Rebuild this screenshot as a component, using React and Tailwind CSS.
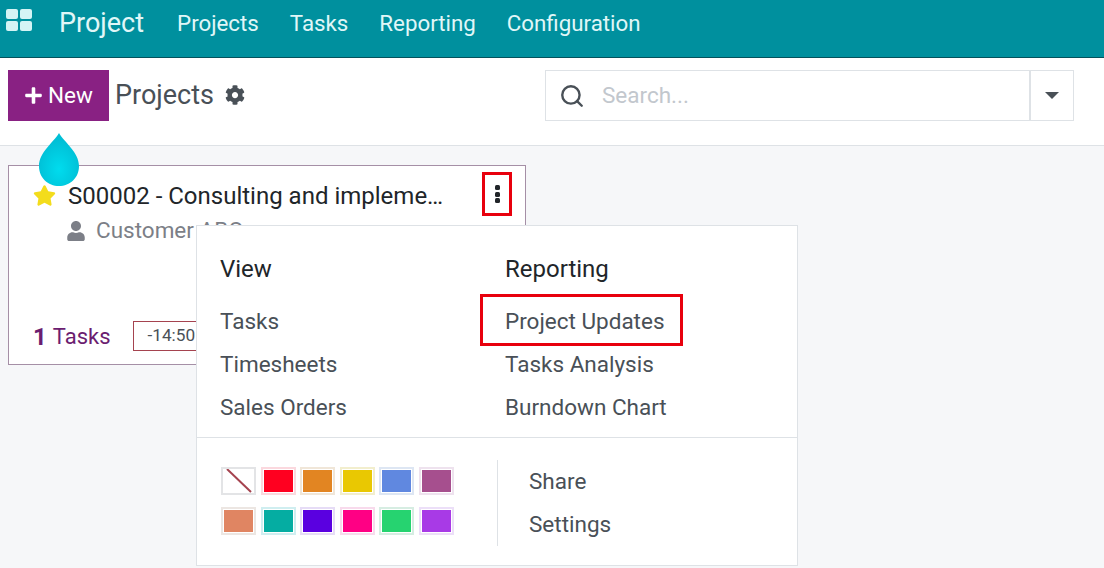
import React from 'react';
import { Search } from 'lucide-react';
import { FaCog, FaUser, FaStar, FaPlus } from 'react-icons/fa';

const navLinks = ['Projects', 'Tasks', 'Reporting', 'Configuration'];
const viewLinks = ['Tasks', 'Timesheets', 'Sales Orders'];
const reportLinks = ['Tasks Analysis', 'Burndown Chart'];

const swatches = [
  { color: 'bg-[#fff]', ring: 'border-[#e3e4e6]', none: true },
  { color: 'bg-[#ff0020]', ring: 'border-[#fbd8de]' },
  { color: 'bg-[#e28522]', ring: 'border-[#f0e6d8]' },
  { color: 'bg-[#e9c802]', ring: 'border-[#f2eecd]' },
  { color: 'bg-[#6088e0]', ring: 'border-[#dde6f3]' },
  { color: 'bg-[#a64f8e]', ring: 'border-[#eee2ee]' },
  { color: 'bg-[#e08562]', ring: 'border-[#ece6e2]' },
  { color: 'bg-[#05ada2]', ring: 'border-[#cfeef0]' },
  { color: 'bg-[#5a00e0]', ring: 'border-[#e6dcf6]' },
  { color: 'bg-[#ff0084]', ring: 'border-[#f8daec]' },
  { color: 'bg-[#26d370]', ring: 'border-[#d6ede2]' },
  { color: 'bg-[#a83ae6]', ring: 'border-[#ecdff8]' },
];

function AppsIcon() {
  return (
    <svg width="26" height="22" viewBox="0 0 26 22" fill="#d5f4f5">
      <rect x="0" y="0" width="12" height="10" rx="2" />
      <rect x="14" y="0" width="12" height="10" rx="2" />
      <rect x="0" y="12" width="12" height="10" rx="2" />
      <rect x="14" y="12" width="12" height="10" rx="2" />
    </svg>
  );
}

function Drop() {
  return (
    <svg className="absolute left-[38px] top-[132px] z-10" width="42" height="55" viewBox="0 0 42 55">
      <defs>
        <radialGradient id="drop" cx="50%" cy="68%" r="55%">
          <stop offset="0%" stopColor="#00dcee" />
          <stop offset="100%" stopColor="#00bfd6" />
        </radialGradient>
      </defs>
      <path d="M21 1 C26 10 41 20 41 34 C41 46 32 54 21 54 C10 54 1 46 1 34 C1 20 16 10 21 1 Z" fill="url(#drop)" />
    </svg>
  );
}

function Swatch({ color, ring, none }) {
  return (
    <div className={`relative w-[35px] h-[28px] border-[2px] ${ring} p-[1px]`}>
      <div className={`w-full h-full ${color}`} />
      {none && (
        <svg className="absolute inset-0" width="31" height="24" viewBox="0 0 31 24">
          <line x1="4" y1="0" x2="28" y2="23" stroke="#a5434f" strokeWidth="2" />
        </svg>
      )}
    </div>
  );
}

function ProjectCard() {
  return (
    <div className="w-[518px] h-[200px] border border-[#a58fa6] bg-white flex flex-col pl-[24px] pr-[13px]">
      <div className="flex items-center h-[44px] mt-[6px]">
        <FaStar size={23} className="text-[#f3dc1c] shrink-0 mt-[2px]" />
        <span className="ml-[12px] mt-[4px] text-[24px] leading-[32px] text-[#212529] w-[376px] truncate">S00002 - Consulting and implementation</span>
        <div className="ml-auto w-[30px] h-[44px] border-[3px] border-[#e8000d] flex flex-col items-center justify-center gap-[1.5px]">
          <span className="w-[5px] h-[5px] rounded-[1.5px] bg-[#212529]" />
          <span className="w-[5px] h-[5px] rounded-[1.5px] bg-[#212529]" />
          <span className="w-[5px] h-[5px] rounded-[1.5px] bg-[#212529]" />
        </div>
      </div>
      <div className="flex items-center pl-[33px] mt-[1px] text-[22.5px] leading-[26px] text-[#7c7f87]">
        <FaUser size={20} className="mt-[1px]" />
        <span className="ml-[10px]">Customer ABC</span>
      </div>
      <div className="flex items-center mt-auto mb-[12px] text-[#6b1d70]">
        <span className="text-[24px] leading-[30px] font-bold mt-[2px]">1</span>
        <span className="ml-[6px] text-[22px] leading-[30px] mt-[2px]">Tasks</span>
        <div className="ml-[22px] w-[110px] h-[30px] border border-[#a5434f] flex items-center pl-[14px] text-[17.2px] text-[#495057]">-14:50</div>
      </div>
    </div>
  );
}

function CardMenu() {
  return (
    <div className="absolute left-[196px] top-[225px] w-[602px] h-[341px] z-20 bg-white border border-[#dee2e6] text-[22.5px] text-[#495057] flex flex-col">
      <div className="flex h-[211px] pl-[23px]">
        <div className="w-[285px] pt-[28px]">
          <div className="text-[#212529] text-[24px] leading-[30px] mb-[23px]">View</div>
          <div className="flex flex-col gap-[15px]">
            {viewLinks.map(l => <div key={l} className="leading-[28px]">{l}</div>)}
          </div>
        </div>
        <div className="pt-[28px]">
          <div className="text-[#212529] text-[24px] leading-[30px] mb-[10px]">Reporting</div>
          <div className="w-[203px] h-[52px] -ml-[25px] mb-[4px] border-[3px] border-[#e8000d] flex items-center pl-[22px]">
            <span className="mt-[3px]">Project Updates</span>
          </div>
          <div className="flex flex-col gap-[15px]">
            {reportLinks.map(l => <div key={l} className="leading-[28px]">{l}</div>)}
          </div>
        </div>
      </div>
      <div className="border-t border-[#dee2e6] flex pt-[22px] pl-[24px]">
        <div className="w-[276px] h-[86px] grid grid-cols-[repeat(6,35px)] gap-x-[4.6px] gap-y-[12px] content-start pt-[7px]">
          {swatches.map((s, i) => <Swatch key={i} {...s} />)}
        </div>
        <div className="h-[86px] border-l border-[#dee2e6] pl-[31px] flex flex-col">
          <div className="mt-[7px] leading-[28px]">Share</div>
          <div className="mt-[15px] leading-[28px]">Settings</div>
        </div>
      </div>
    </div>
  );
}

export default function App() {
  return (
    <div className="relative w-[1104px] h-[568px] overflow-hidden bg-[#f6f7f9]" style={{ fontFamily: 'Roboto, sans-serif' }}>
      {/* Navbar */}
      <header className="h-[58px] bg-[#00909e] border-b border-[#04525c] flex items-start text-[#e0f7f8]">
        <div className="ml-[6px] mt-[9px]"><AppsIcon /></div>
        <div className="ml-[27px] text-[27px] leading-[47px]">Project</div>
        <nav className="flex ml-[33px] gap-[31px] text-[22.3px] leading-[47px]">
          {navLinks.map(l => <span key={l}>{l}</span>)}
        </nav>
      </header>

      {/* Control panel */}
      <div className="h-[88px] bg-white border-b border-[#dee2e6] flex items-start pt-[12px] pl-[8px]">
        <button className="w-[101px] h-[51px] bg-[#892183] text-white flex items-center justify-center gap-[5px] text-[22.5px]">
          <FaPlus size={19} />
          New
        </button>
        <div className="ml-[6px] text-[27px] leading-[50px] text-[#495057]">Projects</div>
        <FaCog size={20} className="ml-[11px] mt-[15px] text-[#495057]" />
        <div className="ml-[300px] flex h-[51px] w-[529px] border border-[#dee2e6]">
          <div className="flex-1 flex items-center pl-[13px]">
            <Search size={26} className="text-[#495057]" strokeWidth={2.2} />
            <span className="ml-[17px] mt-[1px] text-[22.5px] text-[#c2c7cd]">Search...</span>
          </div>
          <div className="w-[44px] border-l-2 border-[#dee2e6] flex items-center justify-center">
            <span className="w-0 h-0 border-x-[7px] border-x-transparent border-t-[7px] border-t-[#495057]" />
          </div>
        </div>
      </div>

      {/* Kanban */}
      <main className="pt-[19px] pl-[8px]">
        <ProjectCard />
      </main>

      <Drop />
      <CardMenu />
    </div>
  );
}
